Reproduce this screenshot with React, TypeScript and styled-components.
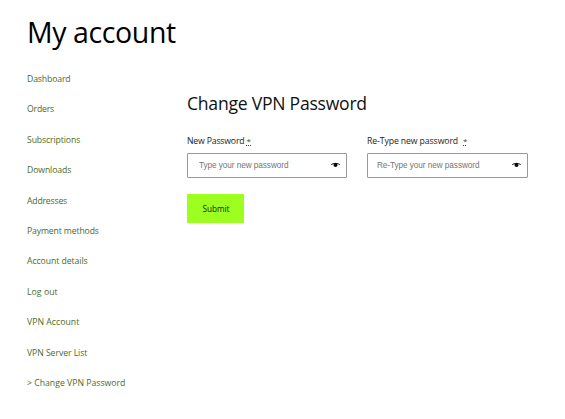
import React from "react";
import styled, { createGlobalStyle } from "styled-components";

const GlobalStyle = createGlobalStyle`
  *, *::before, *::after { box-sizing: border-box; }
  body {
    margin: 0;
    background: #fff;
    color: #111;
    font-family: "Open Sans", "Noto Sans", sans-serif;
  }
`;

const Page = styled.main`
  width: 565px;
  height: 419px;
  padding: 12px 37px 0 27px;
  overflow: hidden;
`;

const PageTitle = styled.h1`
  margin: 0;
  height: 40px;
  font-size: 28.5px;
  line-height: 40px;
  font-weight: 400;
  letter-spacing: -0.4px;
  color: #000;
`;

const Columns = styled.div`
  display: grid;
  grid-template-columns: 160px 341px;
  padding-top: 12.1px;
`;

const Nav = styled.nav`
  display: flex;
  flex-direction: column;
  align-items: flex-start;
`;

const NavLink = styled.a<{ $spacing: number }>`
  height: 30.4px;
  line-height: 30.4px;
  font-size: 8.7px;
  letter-spacing: ${(p) => p.$spacing}px;
  white-space: nowrap;
  color: #4d6b28;
  text-decoration: none;
`;

const Content = styled.section`
  padding-top: 26.9px;
`;

const SectionTitle = styled.h2`
  margin: 0;
  height: 24px;
  line-height: 24px;
  font-size: 17.6px;
  font-weight: 400;
  letter-spacing: -0.25px;
  white-space: nowrap;
  color: #111;
`;

const Fields = styled.div`
  display: grid;
  grid-template-columns: 160px 161px;
  column-gap: 20px;
  padding-top: 17px;
`;

const Field = styled.div`
  display: flex;
  flex-direction: column;
`;

const Label = styled.label<{ $spacing: number; $gap: number }>`
  display: flex;
  height: 21px;
  gap: ${(p) => p.$gap}px;
  line-height: 18px;
  font-size: 8.7px;
  letter-spacing: ${(p) => p.$spacing}px;
  white-space: nowrap;
  color: #222;
`;

const Required = styled.abbr`
  height: 14px;
  font-size: 8px;
  line-height: 17px;
  color: #444;
  text-decoration: none;
  background: repeating-linear-gradient(90deg, #444 0 1px, transparent 1px 2px) left bottom / 100% 1px no-repeat;
`;

const InputBox = styled.div<{ $indent: number }>`
  display: flex;
  align-items: center;
  height: 25px;
  padding: 0 6px 0 ${(p) => p.$indent}px;
  border: 1px solid #999;
  border-radius: 1px;
`;

const Input = styled.input`
  flex: 1;
  min-width: 0;
  height: 22px;
  padding: 0;
  border: 0;
  outline: 0;
  background: transparent;
  font: 8.2px "Liberation Sans", Arial, sans-serif;
  letter-spacing: -0.05px;
  color: #222;
  &::placeholder { color: #757575; opacity: 1; }
`;

const EyeIcon = styled.svg`
  display: block;
  width: 9px;
  height: 6px;
`;

const Submit = styled.button`
  display: block;
  width: 57px;
  height: 29px;
  margin-top: 16px;
  padding: 0 0 0 1px;
  border: 0;
  background: #9dff20;
  color: #182008;
  font: 8.2px/29px "Open Sans", "Noto Sans", sans-serif;
`;

const links = [
  { text: "Dashboard", spacing: -0.15 },
  { text: "Orders", spacing: -0.2 },
  { text: "Subscriptions", spacing: -0.12 },
  { text: "Downloads", spacing: -0.12 },
  { text: "Addresses", spacing: -0.2 },
  { text: "Payment methods", spacing: -0.15 },
  { text: "Account details", spacing: -0.07 },
  { text: "Log out", spacing: 0.05 },
  { text: "VPN Account", spacing: 0.03 },
  { text: "VPN Server List", spacing: -0.07 },
  { text: "> Change VPN Password", spacing: 0 },
];

const Eye = () => (
  <EyeIcon viewBox="0 0 9 6" aria-hidden="true">
    <path d="M0.2 2.7C2.2 0.9 6.8 0.9 8.8 2.7" fill="none" stroke="#222" strokeWidth="1" />
    <circle cx="4.5" cy="3.1" r="2" fill="#080808" />
  </EyeIcon>
);

type PasswordFieldProps = {
  id: string;
  label: string;
  placeholder: string;
  spacing: number;
  gap: number;
  indent: number;
};

const PasswordField = ({ id, label, placeholder, spacing, gap, indent }: PasswordFieldProps) => (
  <Field>
    <Label htmlFor={id} $spacing={spacing} $gap={gap}>
      <span>{label}</span>
      <Required title="required">*</Required>
    </Label>
    <InputBox $indent={indent}>
      <Input id={id} type="password" placeholder={placeholder} />
      <Eye />
    </InputBox>
  </Field>
);

export default function App() {
  return (
    <>
      <GlobalStyle />
      <Page>
        <PageTitle>My account</PageTitle>
        <Columns>
          <Nav>
            {links.map((l) => (
              <NavLink key={l.text} href="#" $spacing={l.spacing}>{l.text}</NavLink>
            ))}
          </Nav>
          <Content>
            <SectionTitle>Change VPN Password</SectionTitle>
            <Fields>
              <PasswordField id="new" label="New Password" placeholder="Type your new password" spacing={-0.18} gap={2} indent={11} />
              <PasswordField id="retype" label="Re-Type new password" placeholder="Re-Type your new password" spacing={-0.1} gap={5} indent={9} />
            </Fields>
            <Submit type="button">Submit</Submit>
          </Content>
        </Columns>
      </Page>
    </>
  );
}
